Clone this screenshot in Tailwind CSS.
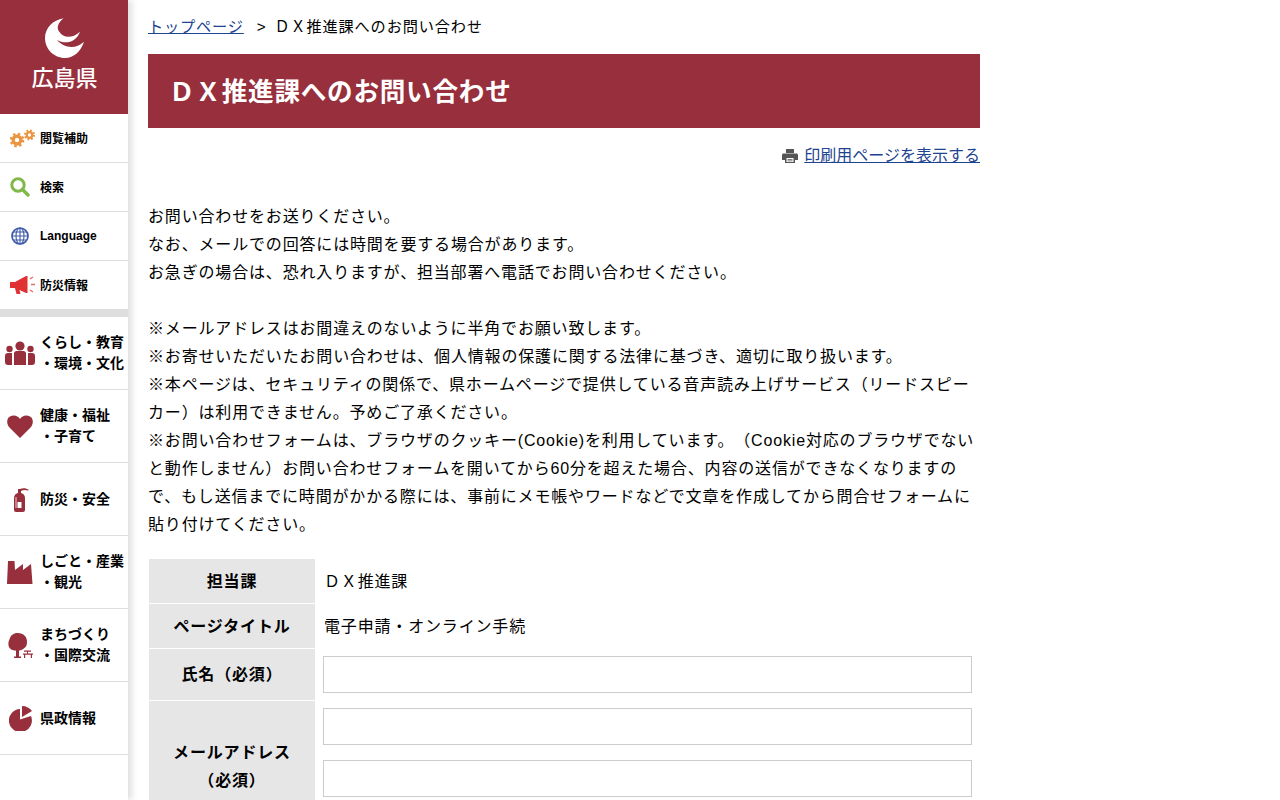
<!DOCTYPE html>
<html lang="ja">
<head>
<meta charset="utf-8">
<title>DX推進課へのお問い合わせ</title>
<script src="https://cdn.jsdelivr.net/npm/@tailwindcss/browser@4"></script>
</head>
<body class="h-[800px] overflow-hidden bg-white text-black [text-spacing-trim:space-all] font-['Liberation_Sans','Noto_Sans_CJK_JP',sans-serif]">
<div class="flex h-[800px]">
  <!-- Side menu -->
  <nav class="w-[128px] h-[800px] shrink-0 bg-white shadow-[4px_0_6px_rgba(0,0,0,0.12)]">
    <div class="h-[114px] bg-[#972f3c] flex flex-col items-center pt-[18px] pl-[1px]">
      <svg class="w-[40px] h-[40px]" viewBox="0 0 40 40"><path fill="#fff" d="M18.500.3C8 2 0 10 0 20c0 11 9 20 20 20 9 0 16-7 19-16.300-8 7.300-19 7.300-27-1.700 9 5 19 2 23-8.300-8 7.300-17 6.300-20.500.3-3.500-4-1.500-9 4-13.700z"/></svg>
      <span class="mt-[6px] text-[22px] leading-[30px] font-medium text-white">広島県</span>
    </div>
    <a class="flex items-center h-[49px] border-b border-[#ddd] pl-[10px] gap-[4px]">
      <svg class="w-[26px] h-[20px] shrink-0" viewBox="0 0 26 20"><g fill="#eb9540"><circle cx="7" cy="12" r="5.500"/><circle cx="19.500" cy="7" r="3.900"/></g><g stroke="#eb9540" fill="none"><circle cx="7" cy="12" r="6" stroke-width="2.600" stroke-dasharray="2.360 2.360"/><circle cx="19.500" cy="7" r="4.500" stroke-width="2.200" stroke-dasharray="1.770 1.770"/></g><circle cx="7" cy="12" r="2.200" fill="#fff"/><circle cx="19.500" cy="7" r="1.700" fill="#fff"/></svg>
      <span class="text-[12px] font-bold pt-[1px]">閲覧補助</span>
    </a>
    <a class="flex items-center h-[49px] border-b border-[#ddd] pl-[10px] gap-[10px]">
      <svg class="w-[20px] h-[20px] shrink-0" viewBox="0 0 20 20"><circle cx="8" cy="8" r="6.200" fill="none" stroke="#80b84a" stroke-width="3"/><path d="M12.500 12.500l5.500 5.500" stroke="#80b84a" stroke-width="3.400" stroke-linecap="round"/></svg>
      <span class="text-[12px] font-bold pt-[1px]">検索</span>
    </a>
    <a class="flex items-center h-[49px] border-b border-[#ddd] pl-[11px] gap-[11px]">
      <svg class="w-[18px] h-[18px] shrink-0" viewBox="0 0 18 18" fill="none" stroke="#3f5ba8" stroke-width="1.100"><circle cx="9" cy="9" r="8" stroke-width="1.700"/><ellipse cx="9" cy="9" rx="4" ry="8"/><path d="M9 1v16M1 9h16M2 5h14M2 13h14"/></svg>
      <span class="text-[12px] font-bold">Language</span>
    </a>
    <a class="flex items-center h-[48px] pl-[10px] gap-[4px]">
      <svg class="w-[26px] h-[20px] shrink-0" viewBox="0 0 26 20"><path fill="#e03232" d="M0 7h5L16 1h1.500v17H16L5 13H0z"/><path fill="#e03232" d="M5 13h4l1.500 6h-4z"/><path stroke="#e76a6a" stroke-width="1.400" d="M20 4l3-2M21 9.500h4M20 15l3 2"/></svg>
      <span class="text-[12px] font-bold pt-[1px]">防災情報</span>
    </a>
    <div class="h-[8px] bg-[#dedede]"></div>
    <a class="flex items-center h-[73px] border-b border-[#ddd] pl-[5px] gap-[5px]">
      <svg class="w-[30px] h-[24px] shrink-0" viewBox="0 0 30 24" fill="#972f3c"><circle cx="15" cy="5" r="4.600"/><circle cx="4.500" cy="8" r="3.200"/><circle cx="25.500" cy="8" r="3.200"/><path d="M9 12.500c0-1.500 1-2.500 2.500-2.500h7c1.500 0 2.500 1 2.500 2.500V24H9z"/><path d="M0 15c0-2 1-3 3-3h4v12H3c-2 0-3-1-3-3zM30 15c0-2-1-3-3-3h-4v12h4c2 0 3-1 3-3z"/></svg>
      <span class="text-[14px] leading-[21px] font-bold">くらし・教育<br>・環境・文化</span>
    </a>
    <a class="flex items-center h-[73px] border-b border-[#ddd] pl-[7px] gap-[7px]">
      <svg class="w-[26px] h-[23px] shrink-0" viewBox="0 0 26 23"><path fill="#972f3c" d="M13 23L2 12C-1 8 0 3 3 1.500 7-.5 11 1 13 4c2-3 6-4.500 10-2.500 3 1.500 4 6.500 1 10.500z"/></svg>
      <span class="text-[14px] leading-[21px] font-bold">健康・福祉<br>・子育て</span>
    </a>
    <a class="flex items-center h-[73px] border-b border-[#ddd] pl-[13px] gap-[11px]">
      <svg class="w-[16px] h-[25px] shrink-0" viewBox="0 0 16 25" fill="#972f3c"><path d="M1 11c0-3 2-5 5.500-5.500C10 6 12 8 12 11v12c0 1-1 2-2 2H3c-1 0-2-1-2-2z"/><path d="M5 6V2h2c3-1 6-1 9 1l-1 .5C12 2.500 10 3 8 4v2z"/><path d="M3 10v11" stroke="#fff" stroke-width=".8"/><rect x="4.500" y="15" width="4" height="6" fill="#fff"/></svg>
      <span class="text-[14px] leading-[21px] font-bold">防災・安全</span>
    </a>
    <a class="flex items-center h-[73px] border-b border-[#ddd] pl-[7px] gap-[7px]">
      <svg class="w-[26px] h-[23px] shrink-0" viewBox="0 0 26 23"><path fill="#972f3c" d="M1 0h6.500l.5 9 8-6v6l8-6 1.500 20H0z"/></svg>
      <span class="text-[14px] leading-[21px] font-bold">しごと・産業<br>・観光</span>
    </a>
    <a class="flex items-center h-[73px] border-b border-[#ddd] pl-[8px] gap-[7px]">
      <svg class="w-[25px] h-[25px] shrink-0" viewBox="0 0 25 25" fill="#972f3c"><path d="M10 0c5 0 9 3.500 9 8.500 0 3-.5 5-2 6-2 2-4 3-6 3V24H8v-6.500C4 17.500 1 16 .5 12 0 10 1 7 2 5 3 2 6 0 10 0z"/><path d="M6 23.500h7V25H6zM16 17.500h7v1.200h-7zM15 20.500h10v1.200H15zM16 21h1.200v4H16zM22.800 21H24v4h-1.200zM19 18h1v3h-1z"/></svg>
      <span class="text-[14px] leading-[21px] font-bold">まちづくり<br>・国際交流</span>
    </a>
    <a class="flex items-center h-[73px] border-b border-[#ddd] pl-[9px] gap-[8px]">
      <svg class="w-[23px] h-[25px] shrink-0" viewBox="0 0 23 25" fill="#972f3c"><path d="M11 3v10.500L22 10a11.500 11.500 0 1 1-11-7z"/><path d="M13 0c4 0 8 2 10 5L13 11z"/></svg>
      <span class="text-[14px] leading-[21px] font-bold pt-[1px]">県政情報</span>
    </a>
  </nav>

  <!-- Main -->
  <main class="w-[832px] ml-[20px] text-[16px] leading-[28px] tracking-[0.83px]">
    <p class="h-[54px] pt-[13px] text-[15.2px]"><a class="underline text-[#1d4391]">トップページ</a><span class="ml-[13px] mr-[8px]">&gt;</span>ＤＸ推進課へのお問い合わせ</p>
    <h1 class="h-[74px] bg-[#972f3c] pl-[21px] pt-[2px] flex items-center text-[25.6px] font-bold text-white tracking-[0.75px]">ＤＸ推進課へのお問い合わせ</h1>
    <p class="flex justify-end items-center gap-[6px] h-[28px] mt-[14px]">
      <svg class="w-[16px] h-[16px]" viewBox="0 0 16 16"><path fill="#555" d="M4 1h8v4H4zM1.500 5.500h13c.8 0 1.500.7 1.500 1.500v5h-3v3H3v-3H0V7c0-.8.7-1.500 1.500-1.500z"/><path fill="#fff" d="M4.500 10h7v4h-7z"/><path fill="#555" d="M5.500 11h5v.8h-5zM5.500 12.500h5v.8h-5z"/></svg>
      <a class="underline text-[#1d4391] tracking-normal">印刷用ページを表示する</a>
    </p>
    <div class="mt-[33px]">
      <p>お問い合わせをお送りください。<br>なお、メールでの回答には時間を要する場合があります。<br>お急ぎの場合は、恐れ入りますが、担当部署へ電話でお問い合わせください。</p>
      <p class="mt-[28px]">※メールアドレスはお間違えのないように半角でお願い致します。<br>※お寄せいただいたお問い合わせは、個人情報の保護に関する法律に基づき、適切に取り扱います。<br>※本ページは、セキュリティの関係で、県ホームページで提供している音声読み上げサービス（リードスピーカー）は利用できません。予めご了承ください。<br>※お問い合わせフォームは、ブラウザのクッキー(Cookie)を利用しています。（Cookie対応のブラウザでないと動作しません）お問い合わせフォームを開いてから60分を超えた場合、内容の送信ができなくなりますので、もし送信までに時間がかかる際には、事前にメモ帳やワードなどで文章を作成してから問合せフォームに貼り付けてください。</p>
    </div>
    <table class="w-[832px] table-fixed mt-[19px] border-separate border-spacing-[1px]">
      <tr>
        <th class="w-[166px] h-[44px] pt-[2px] bg-[#e6e6e6] font-bold">担当課</th>
        <td class="px-[8px] pt-[2px]">ＤＸ推進課</td>
      </tr>
      <tr>
        <th class="h-[44px] pt-[2px] bg-[#e6e6e6] font-bold">ページタイトル</th>
        <td class="px-[8px] pt-[2px]">電子申請・オンライン手続</td>
      </tr>
      <tr>
        <th class="h-[51px] bg-[#e6e6e6] font-bold">氏名（必須）</th>
        <td class="px-[7px]"><input type="text" class="block w-[649px] h-[37px] border border-[#ccc]"></td>
      </tr>
      <tr>
        <th class="h-[130px] pt-[2px] bg-[#e6e6e6] font-bold">メールアドレス<br>（必須）</th>
        <td class="px-[7px] pt-[7px] pb-[34px]">
          <input type="text" class="block w-[649px] h-[37px] border border-[#ccc]">
          <input type="text" class="block w-[649px] h-[37px] mt-[15px] border border-[#ccc]">
        </td>
      </tr>
    </table>
  </main>
</div>
</body>
</html>
